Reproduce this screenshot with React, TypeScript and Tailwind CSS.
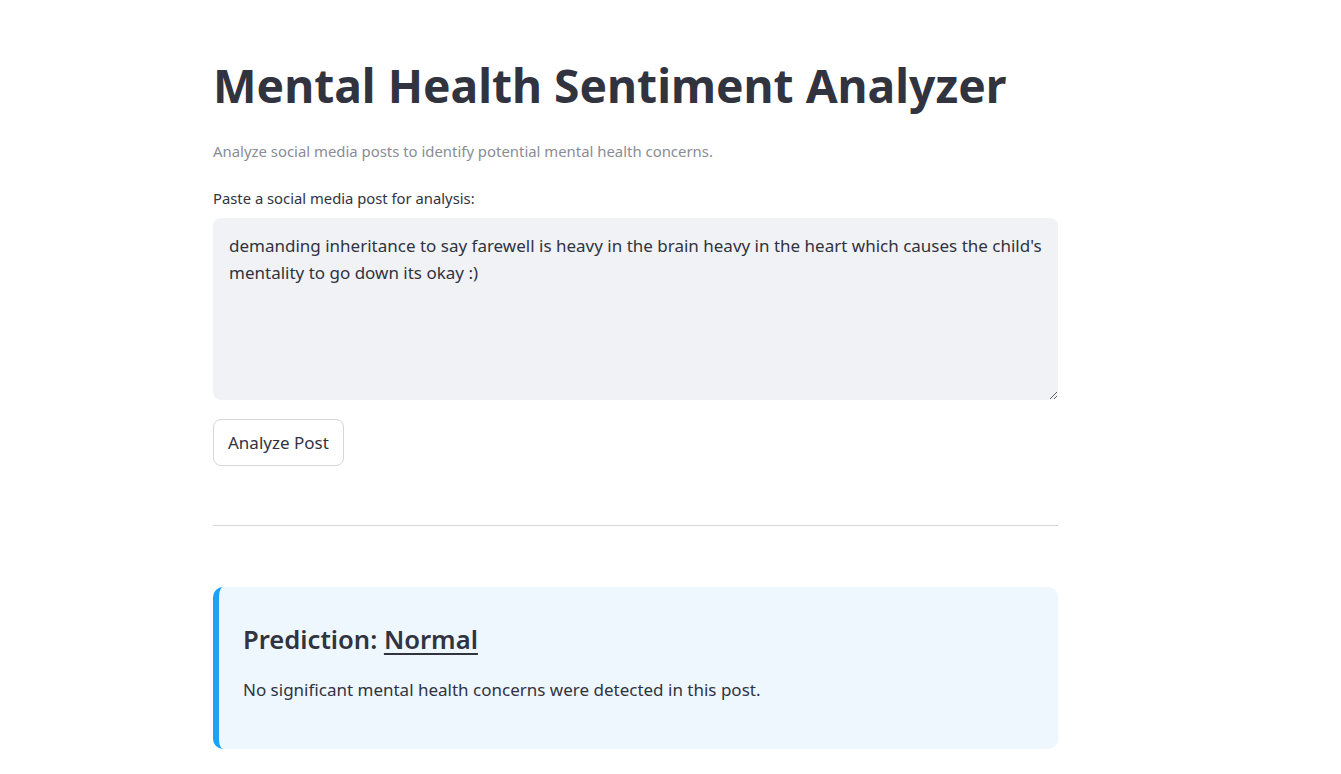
import React, { useState } from 'react';

const App: React.FC = () => {
  const [post, setPost] = useState(
    "demanding inheritance to say farewell is heavy in the brain heavy in the heart which causes the child's mentality to go down its okay :)"
  );

  return (
    <div className="min-h-screen bg-white text-[#31333f] font-['Noto_Sans',sans-serif]">
      <main className="ml-[213px] w-[845px] pt-[58px] pb-6 flex flex-col">
        <h1 className="text-[46.2px] leading-[55px] font-bold">
          Mental Health Sentiment Analyzer
        </h1>

        <p className="mt-[26px] text-[14.9px] leading-[24px] text-[#8a8c95]">
          Analyze social media posts to identify potential mental health concerns.
        </p>

        <label htmlFor="post" className="mt-[25px] text-[14.8px] leading-[20px]">
          Paste a social media post for analysis:
        </label>

        <textarea
          id="post"
          value={post}
          onChange={(e) => setPost(e.target.value)}
          className="mt-[10px] h-[182px] w-full rounded-lg bg-[#f0f2f6] pl-4 pr-3 pt-[14px] text-[17px] leading-[1.6] text-[#31333f] outline-none"
        />

        <div className="mt-[19px]">
          <button className="h-[47px] rounded-lg border border-[#d6d6d9] bg-white px-[14px] text-[17px] text-[#31333f] hover:border-[#ff4b4b] hover:text-[#ff4b4b]">
            Analyze Post
          </button>
        </div>

        <hr className="mt-[59px] border-0 border-t border-[#d5d5d8]" />

        {/* Result */}
        <div className="mt-[61px] rounded-[10px] border-l-[6px] border-[#1da1f2] bg-[#eef6fe] pl-[24px] pr-6 pt-[38px] pb-[46px]">
          <h3 className="text-[25.6px] leading-[1.2] font-semibold">
            Prediction: <span className="underline underline-offset-[4px] decoration-[2px]">Normal</span>
          </h3>
          <p className="mt-[20px] text-[17px] leading-[1.6]">
            No significant mental health concerns were detected in this post.
          </p>
        </div>
      </main>
    </div>
  );
};

export default App;
